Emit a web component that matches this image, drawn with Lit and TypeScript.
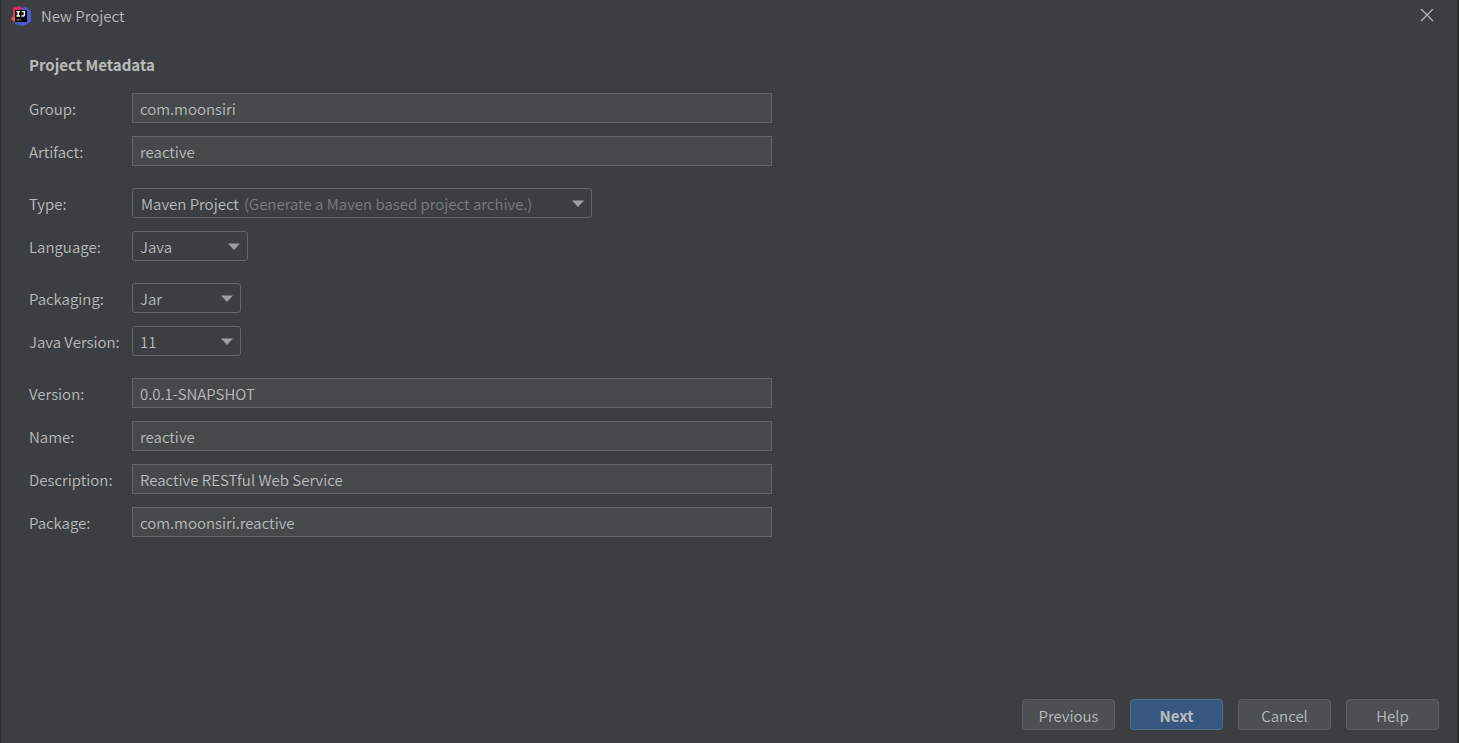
import { LitElement, html, css, svg } from "lit";
import { customElement, property } from "lit/decorators.js";

interface Field {
  id: string;
  label: string;
  value: string;
  kind: "text" | "select";
  hint?: string;
  size?: string;
}

const GROUPS: Field[][] = [
  [
    { id: "group", label: "Group:", value: "com.moonsiri", kind: "text" },
    { id: "artifact", label: "Artifact:", value: "reactive", kind: "text" },
  ],
  [
    {
      id: "type",
      label: "Type:",
      value: "Maven Project",
      hint: "(Generate a Maven based project archive.)",
      kind: "select",
      size: "large",
    },
    { id: "language", label: "Language:", value: "Java", kind: "select", size: "medium" },
  ],
  [
    { id: "packaging", label: "Packaging:", value: "Jar", kind: "select", size: "small" },
    { id: "java-version", label: "Java Version:", value: "11", kind: "select", size: "small" },
  ],
  [
    { id: "version", label: "Version:", value: "0.0.1-SNAPSHOT", kind: "text" },
    { id: "name", label: "Name:", value: "reactive", kind: "text" },
    { id: "description", label: "Description:", value: "Reactive RESTful Web Service", kind: "text" },
    { id: "package", label: "Package:", value: "com.moonsiri.reactive", kind: "text" },
  ],
];

const logo = svg`
  <defs>
    <linearGradient id="warm" x1="0" y1="1" x2="0.6" y2="0">
      <stop offset="0" stop-color="#f58a2c" />
      <stop offset="0.45" stop-color="#e8315f" />
      <stop offset="1" stop-color="#d62a66" />
    </linearGradient>
    <linearGradient id="cool" x1="0" y1="0" x2="1" y2="1">
      <stop offset="0" stop-color="#8a3fb0" />
      <stop offset="0.45" stop-color="#3f5fc8" />
      <stop offset="1" stop-color="#5a50d0" />
    </linearGradient>
  </defs>
  <path d="M2 2 L9 0 L13 4 L12 16 L5 17 L0 13 L2 10 Z" fill="url(#warm)" />
  <path d="M11 2 L15 1 L20 5 L20 16 L12 20 L4 18 L4 14 L12 12 Z" fill="url(#cool)" />
  <rect x="4" y="4" width="12" height="12" fill="#050308" />
  <path d="M5.4 5.6 H9 M7.2 5.6 V10 M5.4 10 H9 M10.6 5.6 H13.4 V8.8 Q13.4 10 12.2 10 H10.4"
    fill="none" stroke="#fff" stroke-width="1.4" />
  <path d="M5.4 13.9 H9.6" stroke="#999" stroke-width="1" />
`;

@customElement("project-field")
export class ProjectField extends LitElement {
  @property({ attribute: false }) field!: Field;

  static styles = css`
    :host {
      display: grid;
      grid-template-columns: 103px minmax(0, 640px);
      align-items: center;
    }
    .label {
      padding-top: 2px;
      line-height: 20px;
      white-space: nowrap;
    }
    .text,
    .select {
      box-sizing: border-box;
      width: 100%;
      height: 30px;
      margin: 0;
      font: inherit;
      color: inherit;
      outline: none;
    }
    .text {
      padding: 0 7px;
      border: 1px solid #646868;
      border-radius: 0;
      background: #45494a;
    }
    .combo {
      display: grid;
      align-items: center;
      max-width: 100%;
    }
    .combo > * {
      grid-area: 1 / 1;
    }
    .large {
      width: 460px;
    }
    .medium {
      width: 116px;
    }
    .small {
      width: 109px;
    }
    .select {
      appearance: none;
      padding: 2px 30px 0 7px;
      border: 1px solid #646868;
      border-radius: 3px;
      background: #3c3f41;
    }
    .covered {
      color: transparent;
    }
    .covered option {
      color: #bbb;
    }
    .rich {
      display: flex;
      gap: 5px;
      padding: 2px 30px 0 9px;
      overflow: hidden;
      line-height: 20px;
      white-space: nowrap;
      pointer-events: none;
    }
    .hint {
      color: #7b7d7e;
    }
    .arrow {
      justify-self: end;
      width: 12px;
      height: 7px;
      margin-right: 8px;
      fill: #9da0a2;
      pointer-events: none;
    }
  `;

  private renderControl(f: Field) {
    if (f.kind === "text") {
      return html`<input class="text" id=${f.id} type="text" spellcheck="false" .value=${f.value} />`;
    }
    return html`
      <div class="combo ${f.size}">
        <select class="select ${f.hint ? "covered" : ""}" id=${f.id}>
          <option>${f.value}</option>
        </select>
        ${f.hint
          ? html`<span class="rich" aria-hidden="true"><span>${f.value}</span><span class="hint">${f.hint}</span></span>`
          : ""}
        <svg class="arrow" viewBox="0 0 12 7" aria-hidden="true"><path d="M0 0.5H12L6 7Z" /></svg>
      </div>
    `;
  }

  render() {
    const f = this.field;
    return html`<label class="label" for=${f.id}>${f.label}</label>${this.renderControl(f)}`;
  }
}

@customElement("app-root")
export class AppRoot extends LitElement {
  static styles = css`
    :host {
      display: block;
    }
    .dialog {
      box-sizing: border-box;
      display: flex;
      flex-direction: column;
      min-height: 100vh;
      border-left: 1px solid #2d2f30;
      border-right: 2px solid #2b2b2b;
      background: #3c3f41;
      color: #bbbbbb;
      font: 350 15px/20px "Noto Sans CJK KR", "Open Sans", sans-serif;
    }
    .titlebar {
      display: flex;
      align-items: center;
      height: 32px;
      padding: 0 23px 0 10px;
    }
    .logo {
      width: 20px;
      height: 20px;
      margin-right: 10px;
    }
    .title {
      flex: 1;
      margin: 0;
      font-size: 15px;
      font-weight: 350;
    }
    .close {
      display: flex;
      padding: 0;
      border: 0;
      background: none;
    }
    .form {
      flex: 1;
      padding: 23px 28px;
    }
    .heading {
      margin: 0 0 18px;
      font-size: 15px;
      line-height: 20px;
      font-weight: 700;
    }
    .groups {
      display: grid;
      gap: 22px;
    }
    .rows {
      display: grid;
      gap: 13px;
    }
    .actions {
      display: flex;
      justify-content: flex-end;
      gap: 15px;
      padding: 0 18px 13px;
    }
    .button {
      box-sizing: border-box;
      width: 93px;
      height: 31px;
      padding: 3px 0 0;
      border: 1px solid #5e6060;
      border-radius: 4px;
      background: #4c5052;
      color: inherit;
      font: inherit;
    }
    .primary {
      border-color: #4c708c;
      background: #365880;
      font-weight: 700;
    }
  `;

  render() {
    return html`
      <div class="dialog">
        <header class="titlebar">
          <svg class="logo" viewBox="0 0 20 20" aria-hidden="true">${logo}</svg>
          <h1 class="title">New Project</h1>
          <button class="close" type="button" aria-label="Close">
            <svg width="14" height="14" viewBox="0 0 14 14" aria-hidden="true">
              <path d="M1 0L13 12M13 0L1 12" stroke="#b4b6b7" stroke-width="1.3" />
            </svg>
          </button>
        </header>
        <main class="form">
          <h2 class="heading">Project Metadata</h2>
          <div class="groups">
            ${GROUPS.map(
              (group) => html`<div class="rows">
                ${group.map((field) => html`<project-field .field=${field}></project-field>`)}
              </div>`
            )}
          </div>
        </main>
        <footer class="actions">
          <button class="button" type="button">Previous</button>
          <button class="button primary" type="button">Next</button>
          <button class="button" type="button">Cancel</button>
          <button class="button" type="button">Help</button>
        </footer>
      </div>
    `;
  }
}
